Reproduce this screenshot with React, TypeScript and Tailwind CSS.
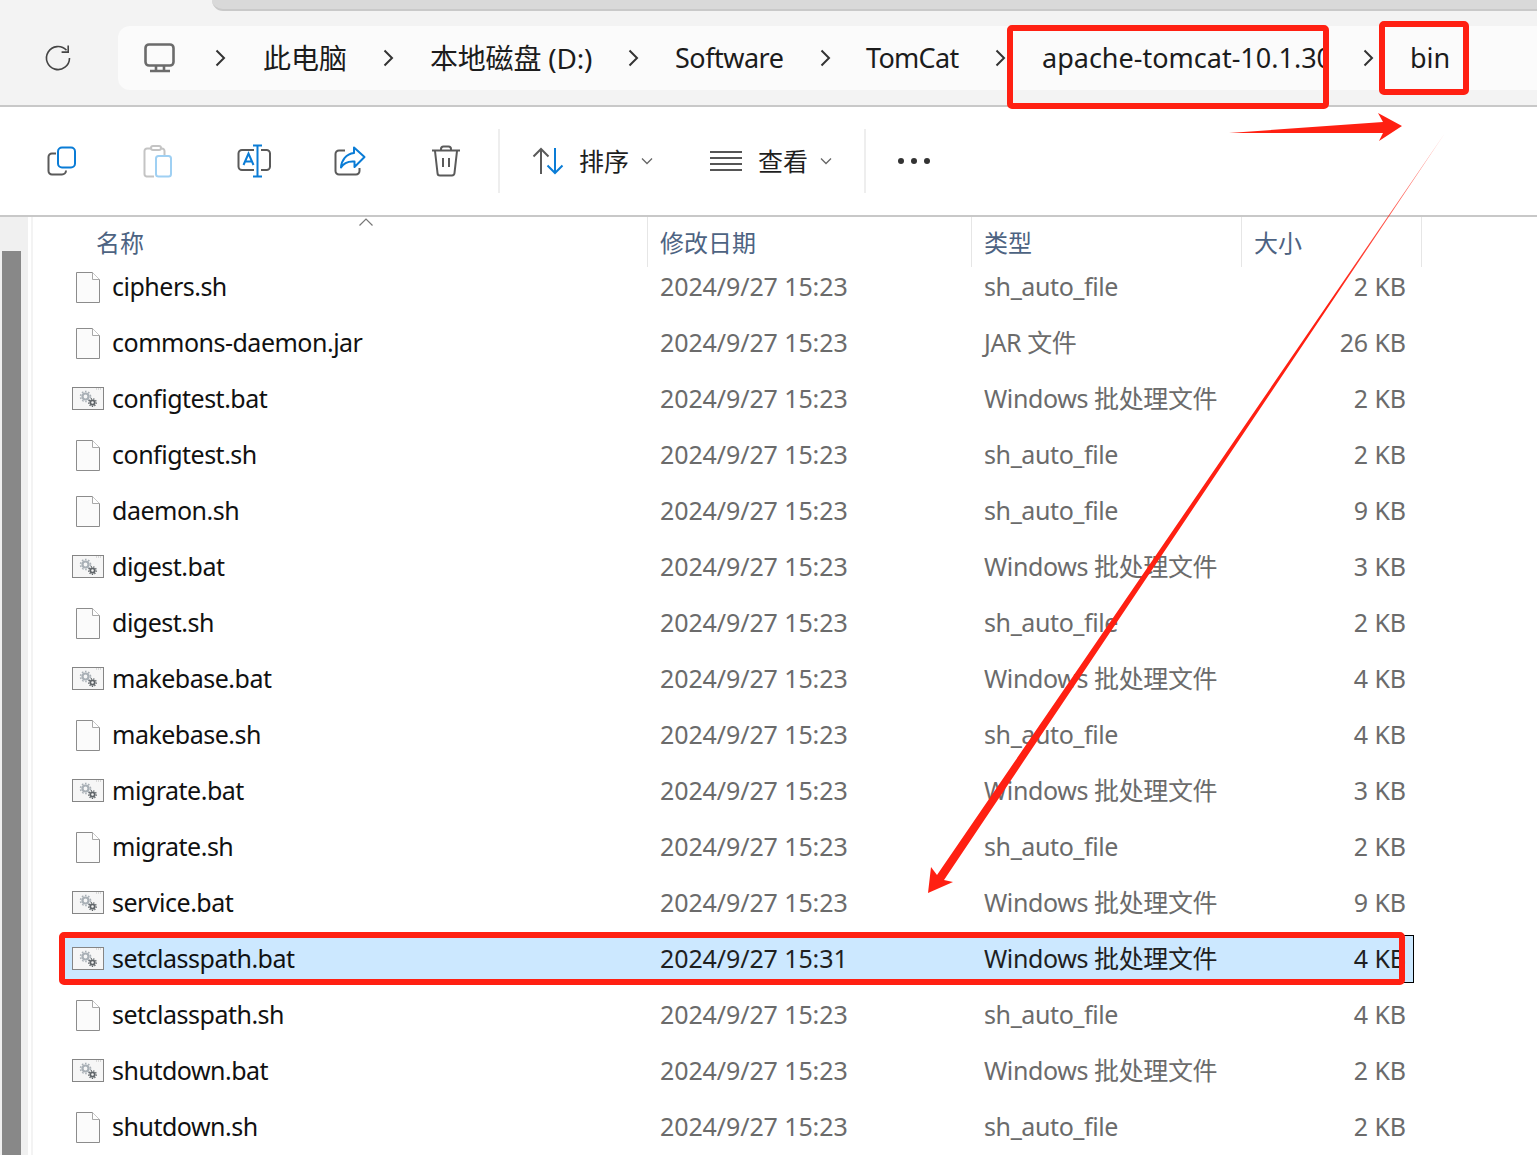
const files = [
  { name: "ciphers.sh", date: "2024/9/27 15:23", type: "sh_auto_file", size: "2 KB", bat: false },
  { name: "commons-daemon.jar", date: "2024/9/27 15:23", type: "JAR 文件", size: "26 KB", bat: false },
  { name: "configtest.bat", date: "2024/9/27 15:23", type: "Windows 批处理文件", size: "2 KB", bat: true },
  { name: "configtest.sh", date: "2024/9/27 15:23", type: "sh_auto_file", size: "2 KB", bat: false },
  { name: "daemon.sh", date: "2024/9/27 15:23", type: "sh_auto_file", size: "9 KB", bat: false },
  { name: "digest.bat", date: "2024/9/27 15:23", type: "Windows 批处理文件", size: "3 KB", bat: true },
  { name: "digest.sh", date: "2024/9/27 15:23", type: "sh_auto_file", size: "2 KB", bat: false },
  { name: "makebase.bat", date: "2024/9/27 15:23", type: "Windows 批处理文件", size: "4 KB", bat: true },
  { name: "makebase.sh", date: "2024/9/27 15:23", type: "sh_auto_file", size: "4 KB", bat: false },
  { name: "migrate.bat", date: "2024/9/27 15:23", type: "Windows 批处理文件", size: "3 KB", bat: true },
  { name: "migrate.sh", date: "2024/9/27 15:23", type: "sh_auto_file", size: "2 KB", bat: false },
  { name: "service.bat", date: "2024/9/27 15:23", type: "Windows 批处理文件", size: "9 KB", bat: true },
  { name: "setclasspath.bat", date: "2024/9/27 15:31", type: "Windows 批处理文件", size: "4 KB", bat: true, selected: true },
  { name: "setclasspath.sh", date: "2024/9/27 15:23", type: "sh_auto_file", size: "4 KB", bat: false },
  { name: "shutdown.bat", date: "2024/9/27 15:23", type: "Windows 批处理文件", size: "2 KB", bat: true },
  { name: "shutdown.sh", date: "2024/9/27 15:23", type: "sh_auto_file", size: "2 KB", bat: false },
];

const crumbs = [
  { label: "此电脑", cls: "w-[168px]", text: "text-[28px] ml-px" },
  { label: "本地磁盘 (D:)", cls: "w-[245px]", text: "text-[28px] tracking-[-0.2px]" },
  { label: "Software", cls: "w-[192px]", text: "tracking-[-0.5px]" },
  { label: "TomCat", cls: "w-[175px]", text: "tracking-[-0.7px] -ml-px" },
  { label: "apache-tomcat-10.1.30", cls: "w-[368px]", text: "w-[284px] overflow-hidden" },
  { label: "bin", cls: "w-[100px]", text: "" },
];

function Chevron() {
  return (
    <svg width="12" height="18" viewBox="0 0 12 18" fill="none" stroke="#333" strokeWidth="2" className="shrink-0 mr-9">
      <path d="M2.5 1.5 10 9l-7.5 7.5" />
    </svg>
  );
}

function DocIcon() {
  return (
    <svg width="24" height="31" viewBox="0 0 24 31">
      <path d="M.5.5h16l7 7v23H.5z" fill="#fbfbfb" stroke="#8c8c8c" />
      <path d="M16.5.5v7h7" fill="#fff" stroke="#a8a8a8" />
    </svg>
  );
}

function BatIcon() {
  return (
    <svg width="32" height="24" viewBox="0 0 32 24">
      <rect x=".5" y=".5" width="31" height="22" fill="#f6f6f6" stroke="#858585" />
      <path d="M24 2h6" stroke="#bbb" strokeDasharray="1 1" />
      <circle cx="13.5" cy="9.5" r="3" fill="none" stroke="#a9b0b6" strokeWidth="2.2" />
      <circle cx="13.5" cy="9.5" r="5" fill="none" stroke="#a9b0b6" strokeWidth="1.6" strokeDasharray="1.6 1.6" />
      <circle cx="20.5" cy="15.5" r="2.2" fill="none" stroke="#5f6468" strokeWidth="1.8" />
      <circle cx="20.5" cy="15.5" r="3.8" fill="none" stroke="#5f6468" strokeWidth="1.3" strokeDasharray="1.3 1.3" />
    </svg>
  );
}

function ToolButton({ children }: { children: React.ReactNode }) {
  return <div className="w-24 h-12 flex items-center justify-center shrink-0">{children}</div>;
}

function SmallChevron() {
  return (
    <svg width="12" height="8" viewBox="0 0 12 8" fill="none" stroke="#666" strokeWidth="1.3" className="shrink-0">
      <path d="M1 1.500 6 6.500l5-5" />
    </svg>
  );
}

export default function App() {
  return (
    <div
      className="relative w-[1537px] h-[1155px] overflow-hidden bg-white text-[25px] text-[#1a1a1a]"
      style={{ fontFamily: '"Noto Sans", "Noto Sans CJK SC", sans-serif' }}
    >
      {/* address bar */}
      <div className="h-[107px] bg-[#f3f3f3] border-b-2 border-[#c8c8c8]">
        <div className="h-[11px] ml-[212px] bg-[#d9d9d9] border-b-2 border-[#c9c9c9] rounded-bl-xl" />
        <div className="flex mt-[15px]">
          <div className="w-[118px] h-16 flex items-center justify-center pr-[3px] shrink-0">
            <svg width="28" height="28" viewBox="0 0 28 28" fill="none" stroke="#444" strokeWidth="1.6">
              <path d="M25.500 14A11.500 11.500 0 1 1 22.500 6.300" />
              <path d="M24.200 1.500v6.600h-6.600" />
            </svg>
          </div>
          <div className="flex-1 h-16 bg-[#fbfbfb] rounded-l-xl flex items-center pl-[26px] text-[27px] text-[#1c1c1c]">
            <div className="w-[70px] shrink-0">
              <svg width="32" height="30" viewBox="0 0 32 30" fill="none" stroke="#6b6b6b" strokeWidth="2.6">
                <rect x="1.500" y="1.500" width="28" height="21" rx="3.500" />
                <path d="M12 23v4M20 23v4M6 28h20" />
              </svg>
            </div>
            {crumbs.map((c) => (
              <div key={c.label} className={`${c.cls} flex items-center shrink-0`}>
                <Chevron />
                <span className={`whitespace-nowrap ${c.text}`}>{c.label}</span>
              </div>
            ))}
          </div>
        </div>
      </div>

      {/* toolbar */}
      <div className="h-[110px] border-b-2 border-[#c8c8c8] flex items-center pl-[14px]">
        <ToolButton>
          <svg width="30" height="30" viewBox="0 0 30 30" fill="none" strokeWidth="2">
            <path d="M9 7.500H5A3.500 3.500 0 0 0 1.500 11v14A3.500 3.500 0 0 0 5 28.500h10a4 4 0 0 0 4-4" stroke="#5a5a5a" />
            <rect x="11" y="1.500" width="17" height="20" rx="4" stroke="#0a7cd6" />
          </svg>
        </ToolButton>
        <ToolButton>
          <svg width="30" height="33" viewBox="0 0 30 33" fill="none" strokeWidth="2">
            <path d="M11 31.500H3.500A2.500 2.500 0 0 1 1.500 29V6A2.500 2.500 0 0 1 4 3.500h15A2.500 2.500 0 0 1 21.500 6v4" stroke="#c4c4c4" />
            <rect x="8" y="1" width="10" height="4" rx="2" stroke="#c4c4c4" fill="#fff" />
            <rect x="13" y="11" width="15" height="20.500" rx="2.500" stroke="#9fd0f3" />
          </svg>
        </ToolButton>
        <ToolButton>
          <svg width="34" height="34" viewBox="0 0 34 34" fill="none" strokeWidth="2">
            <path d="M17 6H5A3.500 3.500 0 0 0 1.500 9.500v13A3.500 3.500 0 0 0 5 26h12M24 6h5.500A3.500 3.500 0 0 1 33 9.500v13a3.500 3.500 0 0 1-3.500 3.500H24" stroke="#5a5a5a" />
            <path d="M20.500 1v32M16 1.500h9M16 32.500h9" stroke="#0a7cd6" />
            <path d="M6.500 21 11.500 9.500 16.500 21M8.300 17.500h6.400" stroke="#0a7cd6" />
          </svg>
        </ToolButton>
        <ToolButton>
          <svg width="32" height="30" viewBox="0 0 32 30" fill="none" strokeWidth="2">
            <path d="M11 4.500H5A3.500 3.500 0 0 0 1.500 8v17A3.500 3.500 0 0 0 5 28.500h17a3.500 3.500 0 0 0 3.500-3.500v-3" stroke="#5a5a5a" />
            <path d="M20 1.500 30.500 11 20.500 21v-5.500C14 15 9.500 17 7 21.500 7.500 14 12 8 20 7z" stroke="#0a7cd6" strokeLinejoin="round" />
          </svg>
        </ToolButton>
        <ToolButton>
          <svg width="30" height="32" viewBox="0 0 30 32" fill="none" stroke="#5a5a5a" strokeWidth="2">
            <path d="M1 5.500h28M10 5.500V4a2.500 2.500 0 0 1 2.500-2.500h5A2.500 2.500 0 0 1 20 4v1.500" />
            <path d="M4 6l2.500 22a2.500 2.500 0 0 0 2.500 2.500h12a2.500 2.500 0 0 0 2.500-2.500L26 6M12 13v9M18 13v9" />
          </svg>
        </ToolButton>
        <div className="w-0.5 h-16 bg-[#eeeeee] ml-[4px] shrink-0" />
        <div className="flex items-center ml-[32px] shrink-0 text-[#1f1f1f]">
          <svg width="32" height="28" viewBox="0 0 32 28" fill="none" strokeWidth="2">
            <path d="M9 27V2M1.500 9.500 9 2l7.500 7.500" stroke="#5a5a5a" />
            <path d="M23 1v25M15.500 18.500 23 26l7.500-7.500" stroke="#0a7cd6" />
          </svg>
          <span className="ml-[15px] relative top-px">排序</span>
          <div className="ml-3"><SmallChevron /></div>
        </div>
        <div className="flex items-center ml-[57px] shrink-0 text-[#1f1f1f]">
          <svg width="32" height="20" viewBox="0 0 32 20" fill="none" stroke="#555" strokeWidth="1.800">
            <path d="M0 1h32M0 7h32M0 13h32M0 19h32" />
          </svg>
          <span className="ml-4 relative top-px">查看</span>
          <div className="ml-3"><SmallChevron /></div>
        </div>
        <div className="w-0.5 h-16 bg-[#eeeeee] ml-[32px] shrink-0" />
        <div className="flex gap-[7px] ml-[32px] shrink-0">
          <div className="w-[6px] h-[6px] rounded-full bg-[#333]" />
          <div className="w-[6px] h-[6px] rounded-full bg-[#333]" />
          <div className="w-[6px] h-[6px] rounded-full bg-[#333]" />
        </div>
      </div>

      {/* list */}
      <div className="flex">
        <div className="w-7 h-[938px] bg-[#f0f0f0] pt-[34px] pl-[2px] shrink-0">
          <div className="w-[19px] h-[904px] bg-[#888888]" />
        </div>
        <div className="w-[2px] h-[938px] ml-[3px] bg-[#f3f3f3] shrink-0" />
        <div className="ml-[31px]">
          <div className="relative grid grid-cols-[584px_324px_270px_180px] h-[50px] text-[24px] text-[#4d6382]">
            <div className="pl-8 pt-2 border-r border-[#e6e6e6]">名称</div>
            <div className="pl-3 pt-2 border-r border-[#e6e6e6]">修改日期</div>
            <div className="pl-3 pt-2 border-r border-[#e6e6e6]">类型</div>
            <div className="pl-3 pt-2 border-r border-[#e6e6e6]">大小</div>
            <svg width="14" height="8" viewBox="0 0 14 8" fill="none" stroke="#777" strokeWidth="1.200" className="absolute left-[295px] top-[1px]">
              <path d="M.5 7.500 7 1l6.500 6.500" />
            </svg>
          </div>
          <div className="-mt-1">
            {files.map((f) => (
              <div
                key={f.name}
                className={`grid grid-cols-[583px_324px_270px_171px] w-[1350px] h-12 mb-2 items-center border ${
                  f.selected ? "bg-[#cce8ff] border-black text-[#1f1f1f]" : "border-transparent text-[#6b6b6b]"
                }`}
              >
                <div className="flex items-center pl-[7px] text-[#111]">
                  <div className="w-8 flex justify-center shrink-0">{f.bat ? <BatIcon /> : <DocIcon />}</div>
                  <span className="ml-2 tracking-[-0.5px]">{f.name}</span>
                </div>
                <div className="pl-3 tracking-[-0.1px]">{f.date}</div>
                <div className="pl-3 whitespace-nowrap tracking-[-0.4px]">{f.type}</div>
                <div className="pr-[7px] text-right tracking-[-0.1px]">{f.size}</div>
              </div>
            ))}
          </div>
        </div>
      </div>

      {/* red annotations drawn on top of the screenshot */}
      <div className="absolute left-[1007px] top-[25px] w-[322px] h-[84px] border-[6px] border-[#ff2012] rounded-[5px]" />
      <div className="absolute left-[1379px] top-[21px] w-[90px] h-[74px] border-[6px] border-[#ff2012] rounded-[5px]" />
      <div className="absolute left-[59px] top-[932px] w-[1346px] h-[53px] border-[6px] border-[#ff2012] rounded-[5px]" />
      <svg width="1537" height="1155" viewBox="0 0 1537 1155" className="absolute left-0 top-0 pointer-events-none">
        <defs>
          <linearGradient id="fade" x1="1445" y1="133" x2="1330" y2="300" gradientUnits="userSpaceOnUse">
            <stop offset="0" stopColor="#ff2012" stopOpacity="0.5" />
            <stop offset="1" stopColor="#ff2012" />
          </linearGradient>
        </defs>
        <path d="M1229 133 1383 122 1378 113 1402 126 1379 141 1383 133z" fill="#ff2012" />
        <path d="M1445 133 944 880 953 882 928 893 931 867 937 875z" fill="url(#fade)" />
      </svg>
    </div>
  );
}
